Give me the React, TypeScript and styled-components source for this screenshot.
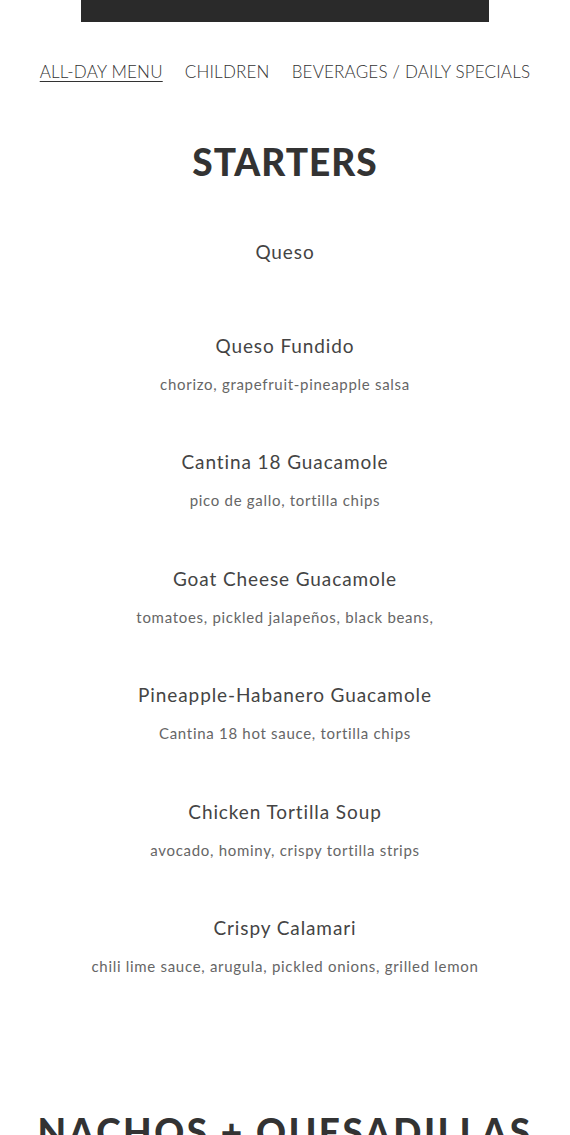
import { createGlobalStyle } from 'styled-components';
import styled from 'styled-components';

/* Data */
interface IMenuItem {
    name: string;
    description?: string;
}

const starters: IMenuItem[] = [
    { name: 'Queso' },
    { name: 'Queso Fundido', description: 'chorizo, grapefruit-pineapple salsa' },
    { name: 'Cantina 18 Guacamole', description: 'pico de gallo, tortilla chips' },
    { name: 'Goat Cheese Guacamole', description: 'tomatoes, pickled jalapeños, black beans,' },
    { name: 'Pineapple-Habanero Guacamole', description: 'Cantina 18 hot sauce, tortilla chips' },
    { name: 'Chicken Tortilla Soup', description: 'avocado, hominy, crispy tortilla strips' },
    { name: 'Crispy Calamari', description: 'chili lime sauce, arugula, pickled onions, grilled lemon' },
];

const tabs = ['ALL-DAY MENU', 'CHILDREN', 'BEVERAGES / DAILY SPECIALS'];

const App = () => {
    return (<Page>
        <GlobalStyle />
        <TopBar />
        <Tabs>
            {tabs.map((tab, i) => (
                <Tab key={tab} active={i === 0}>{tab}</Tab>
            ))}
        </Tabs>
        <Section>
            <SectionTitle spacing={1}>STARTERS</SectionTitle>
            <ItemList>
                {starters.map((item) => (
                    <Item key={item.name} compact={!item.description}>
                        <ItemName>{item.name}</ItemName>
                        {item.description && <ItemDescription>{item.description}</ItemDescription>}
                    </Item>
                ))}
            </ItemList>
        </Section>
        <Section>
            <SectionTitle spacing={2.5}>NACHOS + QUESADILLAS</SectionTitle>
        </Section>
    </Page>);
};

const GlobalStyle = createGlobalStyle`
    html, body {
        margin: 0;
        padding: 0;
        background: #ffffff;
    }
    body {
        font-family: Lato, "Open Sans", sans-serif;
        color: #333333;
    }
`;

const Page = styled.div`
    width: 570px;
    height: 1135px;
    overflow: hidden;
    display: flex;
    flex-direction: column;
    align-items: center;
`;

const TopBar = styled.div`
    width: 408px;
    height: 22px;
    flex-shrink: 0;
    background-color: #2a2a2a;
`;

const Tabs = styled.nav`
    display: flex;
    justify-content: center;
    gap: 22px;
    margin-top: 38px;
`;

const Tab = styled.a<{ active: boolean }>`
    font-family: Lato, sans-serif;
    font-weight: 300;
    font-size: 17px;
    line-height: 24px;
    color: #333333;
    letter-spacing: 0.2px;
    text-decoration: ${props => props.active ? 'underline' : 'none'};
    text-underline-offset: 3px;
    text-decoration-thickness: 1px;
    cursor: pointer;
`;

const Section = styled.section`
    width: 100%;
    flex-shrink: 0;
    display: flex;
    flex-direction: column;
    align-items: center;
`;

const SectionTitle = styled.h2<{ spacing: number }>`
    margin: 53px 0 0;
    font-family: Lato, sans-serif;
    font-weight: 900;
    font-size: 37px;
    line-height: 50px;
    letter-spacing: ${props => props.spacing}px;
    color: #333333;
    white-space: nowrap;
`;

const ItemList = styled.div`
    display: flex;
    flex-direction: column;
    align-items: center;
    margin-top: 53px;
    margin-bottom: 76px;
`;

const Item = styled.div<{ compact: boolean }>`
    display: flex;
    flex-direction: column;
    align-items: center;
    margin-bottom: ${props => props.compact ? '70px' : '54.4px'};

    &:last-child {
        margin-bottom: 0;
    }
`;

const ItemName = styled.h3`
    margin: 0;
    font-family: Lato, sans-serif;
    font-weight: 400;
    font-size: 19px;
    line-height: 24px;
    letter-spacing: 0.9px;
    color: #444444;
`;

const ItemDescription = styled.p`
    margin: 14px 0 0;
    font-family: Lato, sans-serif;
    font-weight: 400;
    font-size: 15px;
    line-height: 24px;
    letter-spacing: 0.7px;
    color: #666666;
`;

export default App
